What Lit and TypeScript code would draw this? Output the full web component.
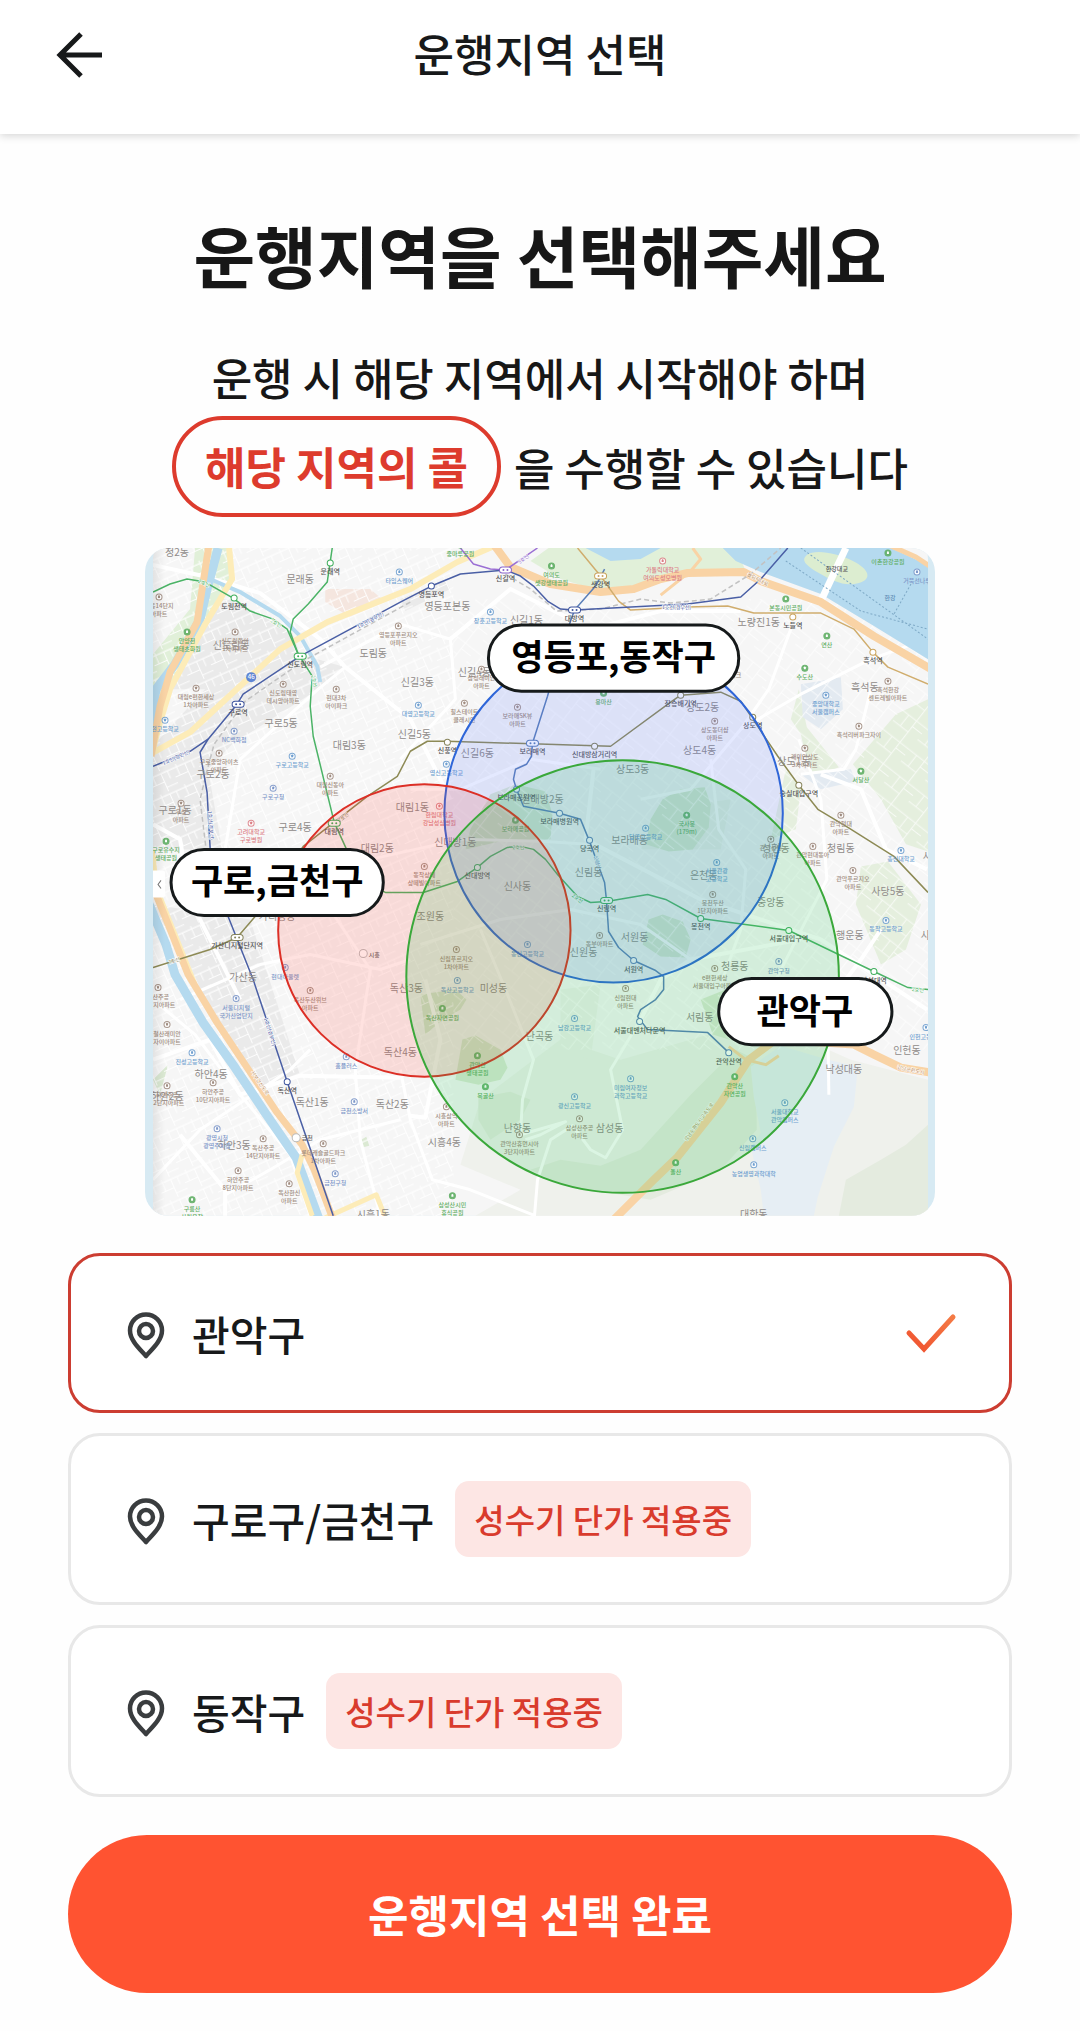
import { LitElement, html, svg, css } from "lit";
import { customElement, property, state } from "lit/decorators.js";
import { classMap } from "lit/directives/class-map.js";

type Kind = "apt" | "school" | "park" | "med" | "shop";
type Point = [number, number];

const DISTRICTS: [number, number, string][] = [
  [177, 553, "정2동"], [300, 580, "문래동"], [231, 646, "신도림동"], [373, 654, "도림동"],
  [281, 724, "구로5동"], [349, 746, "대림3동"], [447, 607, "영등포본동"], [526, 621, "신길1동"],
  [474, 673, "신길4동"], [417, 683, "신길3동"], [414, 735, "신길5동"], [477, 754, "신길6동"],
  [758, 623, "노량진1동"], [702, 708, "상도2동"], [699, 751, "상도4동"], [864, 688, "흑석동"],
  [793, 762, "상도1동"], [213, 775, "구로2동"], [175, 811, "구로1동"], [295, 828, "구로4동"],
  [377, 849, "대림2동"], [277, 917, "가리봉동"], [243, 977, "가산동"], [412, 808, "대림1동"],
  [632, 770, "상도3동"], [542, 800, "신대방2동"], [455, 843, "신대방1동"], [629, 841, "보라매동"],
  [588, 873, "신림동"], [517, 887, "신사동"], [430, 917, "조원동"], [634, 938, "서원동"],
  [583, 952, "신원동"], [406, 988, "독산3동"], [493, 988, "미성동"], [703, 876, "은천동"],
  [775, 849, "성현동"], [840, 849, "청림동"], [770, 903, "중앙동"], [849, 936, "행운동"],
  [887, 892, "사당5동"], [734, 966, "청룡동"], [211, 1074, "하안4동"], [167, 1096, "하안2동"],
  [234, 1145, "하안3동"], [312, 1102, "독산1동"], [392, 1104, "독산2동"], [400, 1052, "독산4동"],
  [373, 1214, "시흥1동"], [444, 1142, "시흥4동"], [539, 1036, "난곡동"], [517, 1128, "난향동"],
  [609, 1128, "삼성동"], [699, 1017, "서림동"], [843, 1069, "낙성대동"], [906, 1050, "인헌동"],
  [753, 1214, "대학동"], [931, 857, "사당"], [929, 936, "사당"],
];

const PLACES: [number, number, Kind, string][] = [
  [187, 633, "park", "안양천|생태초화원"], [159, 598, "apt", "목동14단지|아파트"],
  [235, 633, "apt", "신도림동아|1차아파트"], [196, 689, "apt", "대림e편한세상|1차아파트"],
  [283, 685, "apt", "신도림태영|데시앙아파트"], [336, 690, "apt", "현대3차|아이파크"],
  [165, 721, "school", "현고등학교"], [234, 732, "shop", "NC백화점"], [292, 757, "school", "구로고등학교"],
  [219, 754, "apt", "구로중앙하이츠|아파트"], [399, 573, "school", "타임스퀘어"],
  [398, 627, "apt", "영등포푸르지오|아파트"], [460, 546, "park", "중마루공원"],
  [551, 567, "park", "여의도|샛강생태공원"], [490, 613, "school", "장훈고등학교"],
  [481, 670, "apt", "삼성래미안|아파트"], [464, 704, "apt", "힐스테이트|클래시안"],
  [418, 706, "school", "대영고등학교"], [517, 708, "apt", "보라매SK뷰|아파트"],
  [603, 694, "park", "용마산"], [446, 765, "school", "영신고등학교"], [662, 562, "med", "가톨릭대학교|여의도성모병원"],
  [785, 600, "park", "본동시민공원"], [826, 637, "park", "연산"], [804, 669, "park", "수도산"],
  [887, 554, "park", "이촌한강공원"], [916, 573, "shop", "거북선나루"], [825, 696, "school", "중앙대학교|서울캠퍼스"],
  [887, 682, "apt", "흑석한강|센트레빌아파트"], [858, 727, "apt", "흑석리버파크자이"],
  [714, 722, "apt", "상도동더샵|아파트"], [804, 749, "apt", "래미안상도|3차아파트"], [735, 667, "apt", "파크"],
  [273, 789, "shop", "구로구청"], [330, 777, "apt", "대림신동아|아파트"], [181, 804, "apt", "우성|아파트"],
  [251, 824, "med", "고려대학교|구로병원"], [166, 842, "park", "구로유수지|생태공원"],
  [285, 968, "shop", "현대아울렛"], [439, 807, "med", "한림대학교|강남성심병원"],
  [515, 821, "park", "보라매공원"], [645, 829, "school", "당곡고등학교"], [424, 867, "apt", "동작상떼|상떼빌아파트"],
  [527, 945, "school", "동신고등학교"], [456, 950, "apt", "신림푸르지오|1차아파트"],
  [599, 936, "apt", "동부아파트"], [457, 981, "school", "독산고등학교"], [686, 816, "park", "국사봉|(179m)"],
  [770, 840, "apt", "관악성현|아파트"], [716, 863, "school", "서울관광|고등학교"],
  [712, 895, "apt", "봉천두산|1단지아파트"], [812, 847, "apt", "관악현대동아|아파트"],
  [840, 816, "apt", "관악현대|아파트"], [852, 871, "apt", "관악푸르지오|아파트"],
  [900, 851, "school", "총신대학교"], [885, 921, "school", "동작고등학교"], [860, 772, "park", "서달산"],
  [778, 962, "shop", "관악구청"], [714, 969, "apt", "e편한세상|서울대입구아파트"],
  [158, 988, "apt", "철산주공|13단지아파트"], [236, 999, "shop", "서울디지털|국가산업단지"],
  [310, 991, "apt", "독산두산위브|아파트"], [167, 1025, "apt", "철산래미안|자이아파트"],
  [192, 1053, "school", "진성고등학교"], [213, 1083, "apt", "하안주공|10단지아파트"],
  [167, 1086, "apt", "하안주공|12단지아파트"], [346, 1057, "shop", "홈플러스"], [354, 1102, "shop", "금천소방서"],
  [217, 1129, "shop", "광명시청|광명주차장"], [263, 1139, "apt", "독산주공|14단지아파트"],
  [323, 1144, "apt", "롯데캐슬골드파크|1차아파트"], [238, 1171, "apt", "하안주공|8단지아파트"],
  [289, 1184, "apt", "독산한신|아파트"], [335, 1174, "shop", "금천구청"], [192, 1200, "park", "구름산|산림욕장"],
  [442, 1009, "park", "독산자연공원"], [477, 1056, "park", "관악산|생태공원"], [485, 1087, "park", "목골산"],
  [574, 1019, "school", "남강고등학교"], [625, 989, "apt", "신림현대|아파트"],
  [630, 1079, "school", "미림여자정보|과학고등학교"], [574, 1097, "school", "광신고등학교"],
  [579, 1119, "apt", "삼성산주공|아파트"], [519, 1135, "apt", "관악산휴먼시아|3단지아파트"],
  [446, 1107, "apt", "시흥삼익|아파트"], [452, 1196, "park", "삼성산시민|휴식공원"],
  [734, 1077, "park", "관악산|자연공원"], [784, 1103, "school", "서울대학교|관악캠퍼스"],
  [752, 1139, "school", "신림캠퍼스"], [753, 1165, "school", "농업생명과학대학"], [675, 1163, "park", "돌산"],
  [925, 1028, "school", "인헌고등학교"],
];

const STATIONS: [number, number, string, string][] = [
  [234, 599, "도림천역", "#3fae5c"], [330, 564, "문래역", "#3fae5c"], [300, 657, "신도림역", "#3fae5c"],
  [238, 705, "구로역", "#3c539d"], [431, 587, "영등포역", "#3c539d"], [505, 571, "신길역", "#8a63c9"],
  [600, 577, "샛강역", "#c9a25c"], [574, 611, "대방역", "#3c539d"], [447, 743, "신풍역", "#86835a"],
  [532, 744, "보라매역", "#5a7fb8"], [594, 747, "신대방삼거리역", "#86835a"], [680, 696, "장승배기역", "#86835a"],
  [752, 718, "상도역", "#86835a"], [792, 618, "노들역", "#c9a25c"], [872, 653, "흑석역", "#c9a25c"],
  [334, 824, "대림역", "#3fae5c"], [237, 938, "가산디지털단지역", "#86835a"], [516, 790, "보라매공원역", "#5a7fb8"],
  [559, 814, "보라매병원역", "#5a7fb8"], [589, 841, "당곡역", "#5a7fb8"], [477, 868, "신대방역", "#3fae5c"],
  [606, 901, "신림역", "#3fae5c"], [633, 961, "서원역", "#5a7fb8"], [700, 919, "봉천역", "#3fae5c"],
  [788, 931, "서울대입구역", "#3fae5c"], [798, 786, "숭실대입구역", "#86835a"], [873, 972, "낙성대역", "#3fae5c"],
  [287, 1082, "독산역", "#3c539d"], [639, 1022, "서울대벤처타운역", "#5a7fb8"], [728, 1053, "관악산역", "#5a7fb8"],
];

/* Stations where two or more lines meet, drawn as wide capsules. */
const TRANSFERS = new Set(["신도림역", "구로역", "신길역", "샛강역", "대방역", "보라매역", "대림역", "가산디지털단지역", "신림역"]);

const KIND_COLOR: Record<Kind, string> = {
  apt: "#a08c80", school: "#6f9fd0", park: "#5fae63", med: "#dc7f86", shop: "#7d97c9",
};

const LINE_TAGS: [number, number, number, string, string][] = [
  [204, 584, 24, "2호선", "#3fae5c"], [276, 624, 30, "2호선", "#3fae5c"], [314, 682, 80, "2호선", "#3fae5c"],
  [370, 621, -28, "1호선(경부선)", "#3c539d"], [176, 758, -24, "1호선(경인선)", "#3c539d"],
  [523, 560, -36, "5호선", "#8a63c9"], [676, 608, 0, "1호선(경부선)", "#3c539d"],
  [211, 826, 86, "1호선(경부선)", "#3c539d"], [343, 818, -38, "7호선", "#86835a"], [174, 961, -18, "7호선", "#86835a"],
  [518, 848, 2, "2호선", "#3fae5c"], [577, 899, 38, "2호선", "#3fae5c"], [917, 990, 6, "2호선", "#3fae5c"],
  [270, 1032, 73, "1호선(경부선)", "#3c539d"], [260, 1083, 56, "서부간선도로", "#b98a55"],
  [698, 1122, -54, "강남순환도시고속도로", "#a58f58"], [910, 1070, 12, "강남순환도시", "#c08a55"],
  [757, 580, 28, "올림픽대로", "#b98a55"], [597, 863, 74, "신림선", "#5a7fb8"],
];

const RIVER: Point[][] = [
  [[218, 549], [207, 590], [200, 620], [175, 665], [156, 690], [150, 730]],
  [[203, 577], [240, 593], [280, 617], [300, 637], [317, 667], [320, 683]],
  [[147, 900], [166, 945], [175, 975], [203, 1023], [235, 1068], [265, 1113], [296, 1158], [319, 1220]],
];

const MAIN_ROADS: Point[][] = [
  [[153, 566], [203, 577], [260, 594], [320, 640], [345, 668], [410, 720], [450, 800]],
  [[345, 668], [318, 690], [240, 760], [225, 850]],
  [[320, 668], [400, 625], [450, 640], [455, 700], [400, 760]],
  [[450, 640], [510, 590], [590, 630], [660, 612], [740, 612]],
  [[790, 630], [768, 690], [740, 730], [690, 790], [640, 800]],
  [[740, 730], [800, 695], [870, 660], [926, 640]],
  [[820, 775], [860, 790], [885, 850], [926, 870]],
  [[798, 740], [820, 800], [826, 880], [770, 990]],
  [[710, 760], [718, 830], [745, 870], [740, 930], [720, 985]],
  [[593, 770], [585, 840], [700, 900], [820, 940], [926, 1010]],
  [[410, 790], [460, 790], [530, 760], [600, 770]],
  [[370, 860], [460, 840], [540, 842], [590, 845]],
  [[153, 825], [180, 840], [190, 900], [240, 1000]],
  [[180, 1000], [260, 965], [310, 955], [380, 970], [410, 960]],
  [[300, 860], [330, 910], [370, 970], [355, 1070], [360, 1140], [380, 1216]],
  [[153, 1060], [210, 1040], [240, 1095], [300, 1076], [400, 1078]],
  [[153, 1000], [195, 1035], [240, 1095], [290, 1155], [310, 1216]],
  [[153, 1180], [200, 1130], [290, 1070], [310, 1050]],
  [[180, 1135], [225, 1190], [225, 1216]],
  [[225, 1195], [270, 1170], [320, 1140], [400, 1120]],
  [[400, 1070], [410, 1120], [432, 1180], [470, 1190], [535, 1216]],
  [[410, 1116], [425, 1118], [440, 1040], [425, 980]],
  [[534, 1216], [537, 1180], [550, 1140], [572, 1126], [590, 1150], [605, 1158], [622, 1130], [610, 1070], [640, 1020]],
  [[525, 1140], [540, 1135], [565, 1122], [520, 1135], [522, 1100], [533, 1060], [505, 990], [480, 930]],
  [[640, 1020], [660, 980], [690, 960], [800, 940]],
  [[420, 945], [500, 920], [570, 910], [640, 925], [690, 960]],
  [[827, 1030], [828, 1095]],
  [[880, 930], [860, 960], [830, 1000]],
  [[870, 690], [855, 750], [843, 770], [800, 775]],
];

const pts = (line: Point[]) => line.map((p) => p.join(",")).join(" ");

function place([x, y, kind, name]: [number, number, Kind, string]) {
  const c = KIND_COLOR[kind];
  const solid = kind === "park";
  return svg`
    <circle cx=${x} cy=${y} r="3" fill=${solid ? c : "#fff"} stroke=${c} stroke-width="1" opacity=".9"></circle>
    <path d="M${x - 1} ${y + 1}v-2l1 -1 1 1v2z" fill=${solid ? "#fff" : c}></path>
    ${name.split("|").map((line, i) => svg`<text class="poi" x=${x} y=${y + 11 + i * 8} fill=${c}>${line}</text>`)}`;
}

function station([x, y, name, c]: [number, number, string, string]) {
  const mark = TRANSFERS.has(name)
    ? svg`<rect x=${x - 6} y=${y - 3} width="12" height="6" rx="3" fill="#fff" stroke=${c} stroke-width="1"></rect>
          <circle cx=${x - 2} cy=${y} r="1" fill=${c}></circle><circle cx=${x + 2} cy=${y} r="1" fill=${c}></circle>`
    : svg`<circle cx=${x} cy=${y} r="3" fill="#fff" stroke=${c} stroke-width="1"></circle>`;
  return svg`${mark}<text class="station" x=${x} y=${y + 11}>${name}</text>`;
}

@customElement("zone-map")
export class ZoneMap extends LitElement {
  static styles = css`
    :host { display: block; }
    .map { display: block; width: 100%; height: auto; border-radius: 24px; }
    text { font-family: "Noto Sans CJK KR", sans-serif; text-anchor: middle; }
    .poi { font-size: 6px; font-weight: 500; }
    .tag { font-size: 5px; paint-order: stroke; stroke: #fff; stroke-width: 1px; }
    .station { font-size: 7px; font-weight: 500; fill: #555; }
    .district { font-size: 10px; fill: #8f8b89; }
    .zone { font-size: 35px; font-weight: 700; fill: #000; }
    .pill { fill: #fff; stroke: #161a1b; stroke-width: 3px; }
    .road { fill: none; stroke: #fff; stroke-linejoin: round; }
    .rail { fill: none; stroke-width: 1.5px; stroke-linejoin: round; }
    .water { fill: none; stroke: #b5daef; stroke-linejoin: round; }
    .highway { fill: none; stroke: #f9d3a5; stroke-linejoin: round; }
    .avenue { fill: none; stroke: #fdecb8; stroke-linejoin: round; }
  `;

  render() {
    return html`
      <svg class="map" viewBox="145 549 789 667" role="img" aria-label="운행지역 지도">
        <defs>
          <clipPath id="inner"><rect x="153" y="540" width="774" height="690" rx="20"></rect></clipPath>
          <pattern id="lanes" width="26" height="22" patternUnits="userSpaceOnUse" patternTransform="rotate(-24)">
            <path d="M0 3h26M0 12h14M14 18h12M5 0v12M14 3v19M21 3v8" stroke="#fff" stroke-width="1" fill="none"></path>
          </pattern>
          <pattern id="lanes-alt" width="31" height="27" patternUnits="userSpaceOnUse" patternTransform="rotate(38)">
            <path d="M0 5h31M0 19h19M9 5v14M19 0v27M19 12h12" stroke="#fff" stroke-width="1" fill="none"></path>
          </pattern>
          <linearGradient id="edge" x1="0" x2="1"><stop offset="0" stop-color="#000" stop-opacity=".08"></stop><stop offset="1" stop-color="#000" stop-opacity="0"></stop></linearGradient>
        </defs>
        <rect x="145" y="549" width="789" height="667" fill="#d7eaf3"></rect>
        <g clip-path="url(#inner)">
          <rect x="153" y="549" width="774" height="667" fill="#f6f6f6"></rect>
          <g fill="#eaeaea">
            <path d="M212 600L232 600 292 634 300 655 345 668 318 690 232 745 208 770 222 850 150 850V750L205 690 170 690Z"></path>
            <path d="M153 905L250 920 300 1076 262 1090 196 985Z"></path>
            <path d="M400 600L445 582 450 590 405 612Z"></path>
          </g>
          <g fill="#e1f0d9">
            <path d="M195 549H232L228 590 190 650 153 715V655L190 610Z"></path>
            <path d="M548 549H640L735 549 745 572 690 572 660 582 600 592 560 580 530 562Z"></path>
          </g>
          <g fill="#e5efde">
            <path d="M852 765L895 715 927 700V852L905 845 880 800Z"></path>
            <path d="M798 690L806 728 838 768 810 780 800 735 790 720Z"></path>
            <path d="M860 867L887 862 920 905 905 950 880 965 855 905Z"></path>
            <path d="M785 770L800 790 795 830 770 840Z"></path>
          </g>
          <path d="M800 685L840 678 842 710 820 730 802 718ZM800 775L850 770 855 782 820 790Z" fill="#e3eaf1"></path>
          <g fill="#eff1ec">
            <path d="M480 1100L560 1040 620 1060 760 1020 850 1060 927 1080V1216H475L520 1190 460 1165Z"></path>
            <path d="M560 990L600 985 590 1060 560 1050ZM660 810L730 800 720 850 640 850Z"></path>
          </g>
          <g fill="#dbe9d3">
            <path d="M490 795L515 785 545 792 552 815 550 840 500 842 465 850 470 830Z"></path>
            <path d="M662 800L680 790 704 788 710 805 708 828 692 850 668 852 645 845 650 820Z"></path>
            <path d="M648 920L662 915 682 922 690 940 685 958 660 957 642 945Z"></path>
            <path d="M420 995L455 990 466 1000 460 1010 440 1022 425 1035Z"></path>
            <path d="M462 1040L475 1036 500 1050 507 1068 500 1080 478 1085 455 1080Z"></path>
            <path d="M361 1140l5 -3 3 9 -8 2ZM153 1080L168 1065 160 1095ZM700 1000L725 990 745 1045 712 1035Z"></path>
          </g>
          <g fill="#e4ebdf">
            <path d="M478 1098L510 1092 530 1100 520 1120 490 1140 478 1120ZM560 1160L600 1166 640 1150 690 1095 735 1050 755 1060 756 1130 720 1170 650 1200 560 1185 530 1170Z"></path>
            <path d="M845 1180L880 1160 905 1145 927 1125V1216H838Z"></path>
          </g>
          <path d="M750 1067L780 1046 827 1060 857 1067 853 1107 833 1147 817 1197 813 1216H763L760 1190 750 1147 760 1133 753 1097Z" fill="#e6eef4"></path>
          <path d="M325 590L370 590 385 603 350 618 325 603Z" fill="#f5e6df"></path>
          <rect x="153" y="549" width="300" height="667" fill="url(#lanes)" opacity=".9"></rect>
          <rect x="453" y="600" width="474" height="450" fill="url(#lanes-alt)" opacity=".7"></rect>
          ${MAIN_ROADS.map((l, i) => svg`<polyline class="road" points=${pts(l)} stroke-width=${i % 3 ? 3 : 4}></polyline>`)}
          ${RIVER.map((l, i) => svg`<polyline class="water" points=${pts(l)} stroke-width=${i === 1 ? 4 : 9}></polyline>`)}
          <path d="M531 549H590L612 566 650 566 668 549Z" fill="#e1f0d9"></path>
          <path d="M585 549H660L640 560 610 562Z" fill="#b5daef"></path>
          <path d="M722 549L735 562 760 573 820 595 873 627 927 660V566L890 549Z" fill="#b5daef"></path>
          <path d="M806 556c8 -6 30 -2 46 6s20 18 6 22 -26 -2 -40 -10 -18 -13 -12 -18Z" fill="#dcedd0"></path>
          <path d="M845 549L820 602" stroke="#fff" stroke-width="7"></path>
          <path d="M785 562L860 612 927 630M800 549L927 640M910 585L893 615" fill="none" stroke="#7ea9c6" stroke-width="1" stroke-dasharray="2 2"></path>
          <polyline class="avenue" stroke-width="6" points="229,549 232,580 204,627 170,690 158,730 153,750"></polyline>
          <polyline class="avenue" stroke-width="6" points="150,755 190,733 280,650 327,623 410,590 457,563 503,543"></polyline>
          <polyline class="avenue" stroke-width="5" points="302,1155 297,1173 312,1216"></polyline>
          <polyline class="avenue" stroke-width="5" points="325,1218 376,1195 386,1220"></polyline>
          <polyline class="avenue" stroke-width="5" points="152,850 157,890 185,960 195,985"></polyline>
          <polyline class="highway" stroke-width="7" points="209,545 197,623 170,673 160,707 151,757"></polyline>
          <polyline class="highway" stroke-width="7" points="152,885 169,927 188,975 217,1023 247,1068 277,1113 302,1145 314,1170 333,1220"></polyline>
          <polyline class="highway" stroke-width="8" points="493,545 510,568 550,585 600,593 633,590 660,580 687,574 743,573 760,582 820,603 873,637 930,670"></polyline>
          <polyline class="highway" stroke-width="5" points="888,546 915,558 930,568"></polyline>
          <polyline class="highway" stroke-width="3" points="660,596 690,572 700,560 692,549"></polyline>
          <polyline class="highway" stroke-width="8" points="613,1220 653,1180 677,1157 720,1103 748,1060 775,1040 853,1045 873,1055 900,1068 930,1073"></polyline>
          <polyline class="highway" stroke-width="3" points="728,1047 745,1060 765,1065 778,1056"></polyline>
          <g fill="none" stroke="#c2c2c2" stroke-width="1.5" stroke-dasharray="5 3">
            <polyline points="410,603 303,662 245,702 214,745 206,775 200,800 206,850"></polyline>
            <polyline points="505,575 530,590 556,612 600,610 640,600 670,604 710,600 750,575 780,549"></polyline>
          </g>
          <polyline class="rail" stroke="#d0ad6d" points="577,549 600,577 618,602 630,611 687,608 727,607 753,614 820,614 853,630 872,653 887,668 927,685"></polyline>
          <polyline class="rail" stroke="#9b6fd4" points="460,549 473,565 490,570 505,571 537,549"></polyline>
          <polyline class="rail" stroke="#8d8a55" points="153,968 210,950 237,938 255,917 303,847 367,797 397,777 410,752 427,742 447,742 610,747 670,703 680,696 720,693 740,702 777,757 798,786 817,810 847,828 893,857 927,893"></polyline>
          <polyline class="rail" stroke="#4bb366" points="153,593 170,585 187,580 205,583 233,599 250,612 273,620 287,630 298,655 312,677 310,707 313,737 334,823 360,880 385,893 423,893 457,882 477,868 490,857 507,848 520,847 533,850 545,860 557,875 577,897 590,903 606,902 647,895 665,900 700,919 788,931 873,972 907,988 927,990"></polyline>
          <polyline class="rail" stroke="#4bb366" points="332,549 327,583 308,605 293,620 290,633 298,655"></polyline>
          <polyline class="rail" stroke="#5a7fb8" points="604,570 595,587 574,611 560,650 547,697 532,744 531,757 526,765 515,770 513,780 516,790 523,807 559,814 580,820 589,842 604,883 606,902 608,932 618,948 633,961 655,971 663,977 663,990 655,1000 640,1010 637,1017 647,1030 707,1033 728,1053"></polyline>
          <polyline class="rail" stroke="#4a5fa5" points="787,549 760,580 740,598 687,605 574,611 560,610 547,602 533,587 520,577 505,571 460,575 431,587 400,603 300,657 243,695 237,705 208,740 200,753 207,793 210,848 228,917 253,980 287,1082 333,1216"></polyline>
          <polyline class="rail" stroke="#4a5fa5" points="208,740 190,752 153,767"></polyline>
          ${LINE_TAGS.map(([x, y, a, t, c]) => svg`<text class="tag" x=${x} y=${y + 2} fill=${c} transform="rotate(${a} ${x} ${y})">${t}</text>`)}
          ${DISTRICTS.map(([x, y, t]) => svg`<text class="district" x=${x} y=${y + 4}>${t}</text>`)}
          ${PLACES.map(place)}
          ${STATIONS.map(station)}
          <text class="poi" x="836" y="572" fill="#555">한강대교</text>
          <text class="poi" x="889" y="601" fill="#5f8db5">한강</text>
          <circle cx="251" cy="678" r="5" fill="#5f86d4"></circle>
          <text class="poi" x="251" y="680" fill="#fff">46</text>
          <circle cx="363" cy="954" r="4" fill="#fff" stroke="#bbb"></circle>
          <text class="poi" x="374" y="957" fill="#666">시흥</text>
          <circle cx="296" cy="1138" r="4" fill="#fff" stroke="#bbb"></circle>
          <text class="poi" x="307" y="1140" fill="#666">금천</text>
          <rect x="153" y="549" width="12" height="667" fill="url(#edge)"></rect>
          <rect x="151" y="871" width="14" height="27" rx="2" fill="#fff"></rect>
          <path d="M161 881l-3 4 3 4" fill="none" stroke="#777"></path>
        </g>
        <circle cx="613" cy="814" r="169" fill="#5a78ff" fill-opacity=".16" stroke="#2f66d8" stroke-width="2"></circle>
        <circle cx="424" cy="931" r="146" fill="#ff3a30" fill-opacity=".15" stroke="#dc2f26" stroke-width="2"></circle>
        <circle cx="622" cy="977" r="216" fill="#22c050" fill-opacity=".16" stroke="#3aa83a" stroke-width="2"></circle>
        <rect class="pill" x="488" y="626" width="250" height="66" rx="33"></rect>
        <text class="zone" x="613" y="671">영등포,동작구</text>
        <rect class="pill" x="171" y="850" width="212" height="66" rx="33"></rect>
        <text class="zone" x="277" y="895">구로,금천구</text>
        <rect class="pill" x="718" y="979" width="173" height="66" rx="33"></rect>
        <text class="zone" x="804" y="1024">관악구</text>
      </svg>`;
  }
}

@customElement("region-option")
export class RegionOption extends LitElement {
  @property() name = "";
  @property({ type: Boolean }) peak = false;
  @property({ type: Boolean }) checked = false;

  static styles = css`
    :host { display: block; }
    .card {
      display: flex; align-items: center; box-sizing: border-box; min-height: 160px;
      padding: 45px 52px 45px 54px; border: 3px solid #e8e8e8; border-radius: 32px;
      background: #fff; cursor: pointer;
    }
    .peak { min-height: 172px; }
    .on { border-color: #cc3d31; }
    .radio { appearance: none; width: 0; height: 0; margin: 0; outline: none; }
    .card:has(.radio:focus-visible) { outline: 3px solid #ff5331; }
    .pin { flex: none; width: 42px; height: 48px; margin-top: 6px; }
    .name { margin-left: 25px; font-size: 41px; line-height: 60px; font-weight: 500; color: #17191a; }
    .badge {
      margin-left: 21px; padding: 14px 19px; border-radius: 14px; background: #fde6e4;
      color: #d93b2d; font-size: 33px; line-height: 48px; font-weight: 500;
    }
    .check { width: 52px; height: 40px; margin-left: auto; }
  `;

  private pick() {
    this.dispatchEvent(new CustomEvent("pick", { detail: this.name, bubbles: true, composed: true }));
  }

  render() {
    return html`
      <label class=${classMap({ card: true, on: this.checked, peak: this.peak })}>
        <input class="radio" type="radio" .checked=${this.checked} @change=${this.pick} />
        <svg class="pin" viewBox="0 0 42 48" fill="none" stroke="#3a3d3f" stroke-width="4.500" aria-hidden="true">
          <path d="M21 44C16 38 5 29 5 18.500a16 16 0 0 1 32 0C37 29 26 38 21 44Z" stroke-linejoin="round"></path>
          <circle cx="21" cy="19" r="7"></circle>
        </svg>
        <span class="name">${this.name}</span>
        ${this.peak ? html`<span class="badge">성수기 단가 적용중</span>` : null}
        ${this.checked
          ? html`<svg class="check" viewBox="0 0 52 40" fill="none" aria-hidden="true">
              <defs><linearGradient id="tick" x1="0" y1="1" x2="1" y2="0">
                <stop offset="0" stop-color="#f0522f"></stop><stop offset="1" stop-color="#f47a45"></stop>
              </linearGradient></defs>
              <path d="M4 20L19 36 48 4" stroke="url(#tick)" stroke-width="5" stroke-linecap="round"></path>
            </svg>`
          : null}
      </label>`;
  }
}

@customElement("app-root")
export class AppRoot extends LitElement {
  @state() private selected = "관악구";

  static styles = css`
    :host {
      display: block; min-height: 100vh; background: #fefefe; color: #17191a;
      font-family: "Noto Sans CJK KR", "Noto Sans", sans-serif;
    }
    .bar {
      display: grid; grid-template-columns: 104px 1fr 104px; align-items: center;
      box-sizing: border-box; height: 134px; padding: 0 0 24px; background: #fff;
      box-shadow: 0 2px 8px rgba(0, 0, 0, 0.16);
    }
    .back { width: 104px; height: 84px; padding: 0; border: 0; background: none; cursor: pointer; }
    .arrow { display: block; width: 48px; height: 46px; margin-left: 55px; }
    .heading { margin: 0; padding-bottom: 4px; text-align: center; font-size: 44px; line-height: 64px; font-weight: 500; }
    .content { display: flex; flex-direction: column; padding: 71px 68px 38px; }
    .title { margin: 0; text-align: center; font-size: 67px; line-height: 98px; font-weight: 700; color: #171717; }
    .lead { margin: 42px 0 0; text-align: center; font-size: 44px; line-height: 64px; font-weight: 500; color: #171717; }
    .line { display: flex; justify-content: center; align-items: center; gap: 13px; margin-top: 7px; }
    .mark { padding: 15px 29px; border: 4px solid #dd3b2d; border-radius: 51px; color: #dd3b2d; line-height: 63px; font-weight: 700; }
    .zones { margin: 31px 77px 37px; }
    .options { display: flex; flex-direction: column; gap: 20px; margin: 0; padding: 0; border: 0; }
    .submit {
      min-height: 158px; margin-top: 38px; border: 0; border-radius: 79px; background: #ff5331; color: #fff;
      font: inherit; font-size: 44px; line-height: 64px; font-weight: 700; cursor: pointer;
    }
  `;

  render() {
    const regions = [
      { name: "관악구", peak: false },
      { name: "구로구/금천구", peak: true },
      { name: "동작구", peak: true },
    ];
    return html`
      <header class="bar">
        <button class="back" type="button" aria-label="뒤로">
          <svg class="arrow" viewBox="0 0 48 46" fill="none" stroke="#17191a" stroke-width="5" aria-hidden="true">
            <path d="M26 2L5 23 26 44M5 23H47"></path>
          </svg>
        </button>
        <h2 class="heading">운행지역 선택</h2>
      </header>
      <main class="content">
        <h1 class="title">운행지역을 선택해주세요</h1>
        <div class="lead">
          <div>운행 시 해당 지역에서 시작해야 하며</div>
          <div class="line"><strong class="mark">해당 지역의 콜</strong><span>을 수행할 수 있습니다</span></div>
        </div>
        <zone-map class="zones"></zone-map>
        <fieldset class="options" aria-label="운행지역" @pick=${(e: CustomEvent<string>) => (this.selected = e.detail)}>
          ${regions.map((r) => html`<region-option .name=${r.name} .peak=${r.peak} .checked=${r.name === this.selected}></region-option>`)}
        </fieldset>
        <button class="submit" type="button">운행지역 선택 완료</button>
      </main>`;
  }
}
